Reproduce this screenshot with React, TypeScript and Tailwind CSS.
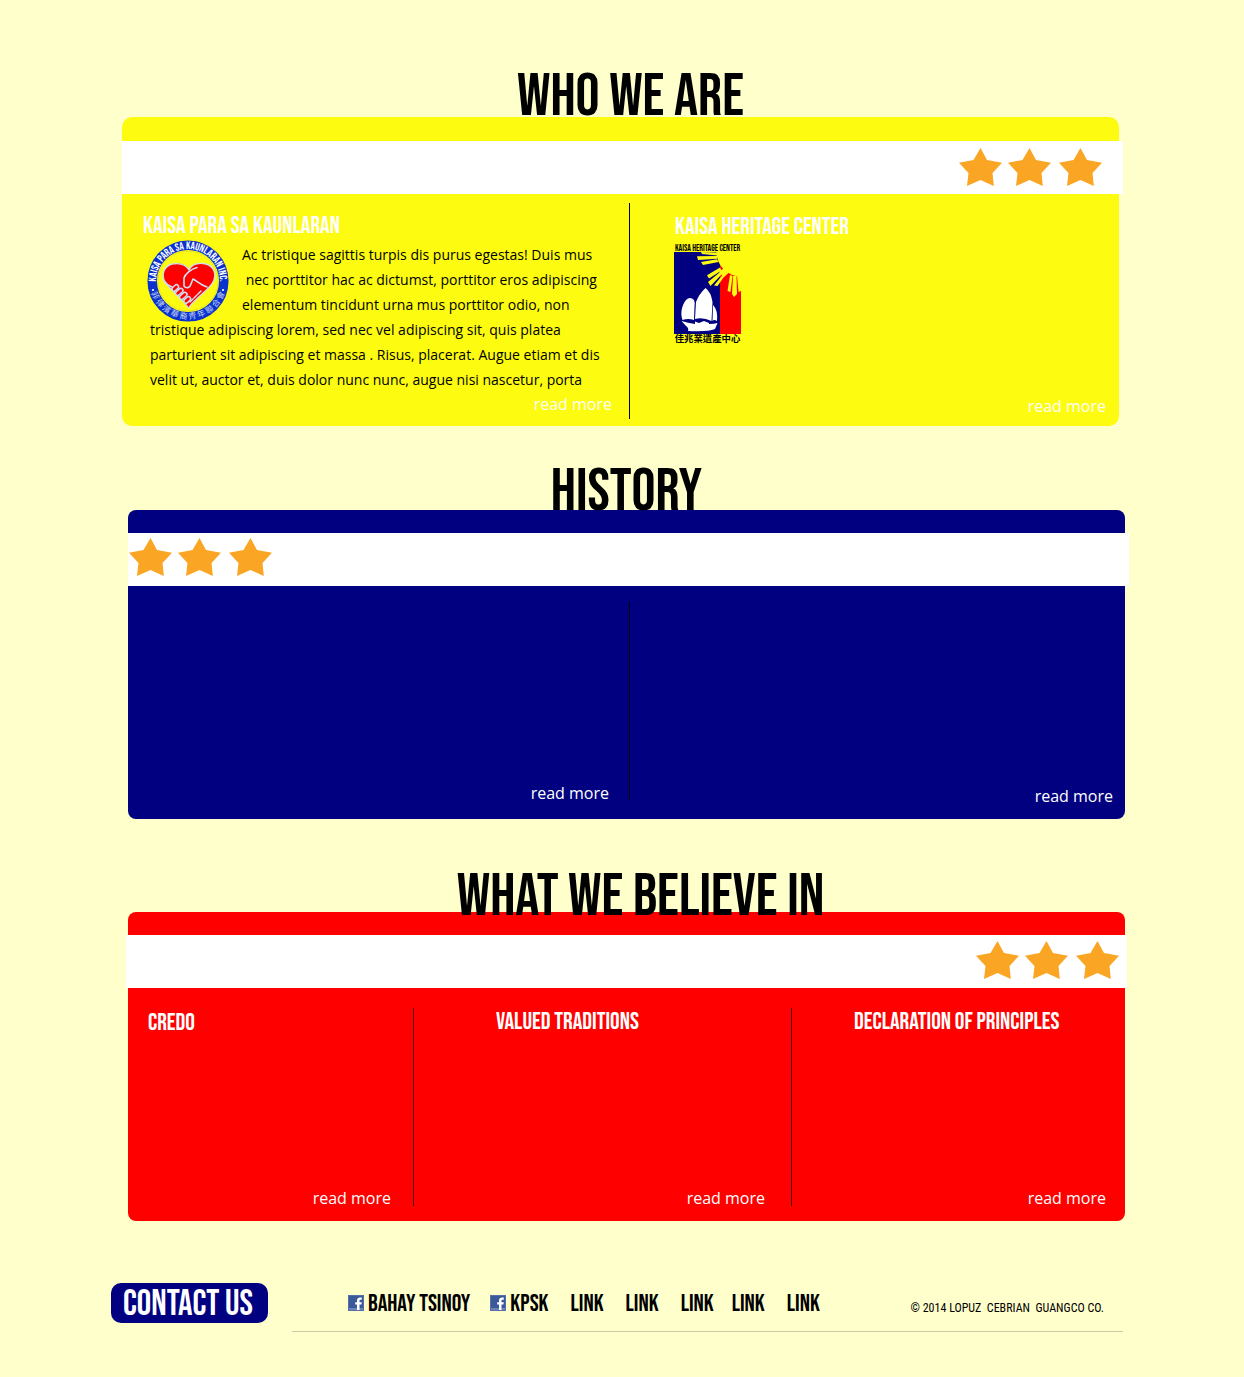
import type { ReactNode } from "react";

function Star() {
  return (
    <svg viewBox="0 0 43 38" className="h-[38px] w-[43px]" fill="#faa523" aria-hidden="true">
      <path d="M21.5 0L28 12L43 14.8L33.5 25L34.8 38L21.5 32L8 38L9.5 25L0 14.8L14.5 12Z" />
    </svg>
  );
}

function Stars() {
  return (
    <div className="flex">
      <Star />
      <span className="ml-1.5 mr-2 flex">
        <Star />
      </span>
      <Star />
    </div>
  );
}

function ReadMore() {
  return (
    <a href="#more" className="mt-auto self-end text-base leading-6 text-white">
      read more
    </a>
  );
}

function Title({ children }: { children: ReactNode }) {
  return (
    <h3 className="font-['Bebas_Neue',Oswald,sans-serif] text-2xl leading-6 text-white">{children}</h3>
  );
}

function Heading({ children, className = "" }: { children: ReactNode; className?: string }) {
  return (
    <h2
      className={`relative text-center font-['Bebas_Neue',Oswald,sans-serif] text-[60px] leading-10 text-black ${className}`}
    >
      {children}
    </h2>
  );
}

function KaisaLogo() {
  return (
    <svg
      viewBox="0 0 82 82"
      className="h-[82px] w-[82px] overflow-visible"
      role="img"
      aria-label="Kaisa Para Sa Kaunlaran Inc."
    >
      <defs>
        <path id="arc-top" d="M12.7 56A32 32 0 1 1 69.3 56" />
        <path id="arc-bottom" d="M2.2 44A39 39 0 0 0 79.8 44" />
      </defs>
      <circle cx="41" cy="41" r="35.8" fill="none" stroke="#0b32cf" strokeWidth="9.5" />
      <circle cx="41" cy="41" r="30" fill="none" stroke="#d4d83a" strokeWidth="0.6" />
      <text fill="#ffffff" fontSize="10.6" textAnchor="middle" className="font-['Bebas_Neue',Oswald,sans-serif]">
        <textPath href="#arc-top" startOffset="50%">
          KAISA PARA SA KAUNLARAN INC.
        </textPath>
      </text>
      <text fill="#c3d2f4" fontSize="8" textAnchor="middle" className="font-['Noto_Sans_CJK_TC',sans-serif]">
        <textPath href="#arc-bottom" startOffset="50%">
          菲 律 濱 華 裔 青 年 聯 合 會
        </textPath>
      </text>
      <circle cx="6" cy="50" r="1.1" fill="#fff" />
      <circle cx="76" cy="50" r="1.1" fill="#fff" />
      <path
        d="M42 30C38 23 31 23 25 24C17 26 14 35 18 42C21 48 35 58 41.5 68C48 58 62 50 66 42C70 35 67 26 59 24C52 22.5 45 24 42 30Z"
        fill="#fe0000"
        stroke="#cfe0f0"
        strokeWidth="1.3"
      />
      <g fill="none" stroke="#cfe0f0" strokeWidth="1.6" strokeLinecap="round" strokeLinejoin="round">
        <path d="M50 27.5C44 29 38 34 37 38V46C39 49 43 48 44 44L46 39C50 41 53 45 60 47" />
        <path d="M17 41C21 46 23 46 25 47" />
      </g>
      <g fill="#fe0000" stroke="#cfe0f0" strokeWidth="1.5">
        <rect x="-3.5" y="-2" width="7.5" height="4.2" rx="2.1" transform="translate(28 48) rotate(-42)" />
        <rect x="-4" y="-2" width="8.5" height="4.2" rx="2.1" transform="translate(32 52) rotate(-42)" />
        <rect x="-4" y="-2" width="8.5" height="4.2" rx="2.1" transform="translate(36 56) rotate(-42)" />
        <rect x="-3.5" y="-2" width="7.5" height="4.2" rx="2.1" transform="translate(40 60) rotate(-42)" />
      </g>
      <path d="M43 62L46 59M47 58L50 55M51 54L54 51" stroke="#cfe0f0" strokeWidth="1.5" strokeLinecap="round" />
    </svg>
  );
}

function HeritageLogo() {
  return (
    <svg viewBox="0 0 67 100" className="h-[100px] w-[67px]" role="img" aria-label="Kaisa Heritage Center">
      <defs>
        <clipPath id="flag">
          <rect x="0" y="8" width="67" height="82" />
        </clipPath>
      </defs>
      <text
        x="33.5"
        y="7"
        fontSize="9"
        textAnchor="middle"
        fill="#000"
        className="font-['Bebas_Neue',Oswald,sans-serif]"
      >
        KAISA HERITAGE CENTER
      </text>
      <g clipPath="url(#flag)">
        <rect x="0" y="8" width="46" height="82" fill="#000080" />
        <rect x="46" y="8" width="21" height="82" fill="#fe0000" />
        <circle cx="67" cy="8" r="24.5" fill="#fdfb0f" />
        <g fill="#fdfb0f">
          <path d="M43 8.5L27 8L28 10L43 11.5Z" />
          <path d="M43 12L23 12.3L24 16L43 14.7Z" />
          <path d="M43 15.2L27 18L29 21L44.5 18Z" />
          <path d="M46 23.5L33 31.2L35 34.5L47.5 26.5Z" />
          <path d="M48 26.5L34 38L36.5 42L50 28Z" />
          <path d="M50.5 28.5L40 41.5L43.5 42L52 30Z" />
          <path d="M45 28L50 24L55 28.5L50 33Z" />
          <path d="M56 31L53.5 47L56.5 48L58.5 32Z" />
          <path d="M59 32L58 50L60 53L63 50L62.5 32Z" />
          <path d="M63 32L64.5 48L67 47V32Z" />
        </g>
      </g>
      <g fill="#fff">
        <path d="M8.5 76C6 69 8 61 12 56Q16 52 20 56Q21 58 20.5 62L20 76Q14 74 8.5 76Z" />
        <path d="M21 75L22 58Q25 50 31.5 44Q37 48 38.5 58L37.5 77Q29 73 21 75Z" />
        <path d="M39 61Q44 66 43 77Q40 75 38.5 77Z" />
        <path d="M7.5 77Q14 79 21 80V77.5L25 79L30 77L35 79V80Q40 80 43.5 79L41 85Q34 88 14 87Q15 84 12 82Z" />
      </g>
      <text
        x="33.5"
        y="98"
        fontSize="9.4"
        fontWeight="700"
        textAnchor="middle"
        fill="#000"
        className="font-['Noto_Sans_CJK_TC',sans-serif]"
      >
        佳兆業遺產中心
      </text>
    </svg>
  );
}

function FacebookIcon() {
  return (
    <svg viewBox="0 0 16 16" className="mb-0.5 mr-1 h-4 w-4" aria-hidden="true">
      <rect width="16" height="16" fill="#3b5998" />
      <rect x="0.5" y="0.5" width="15" height="15" fill="none" stroke="#5570a8" />
      <rect x="1" y="13" width="14" height="2" fill="#6d84b4" />
      <path
        d="M9 15V9.5H7.2V7.2H9V5.5C9 3.5 10.2 2.5 12 2.5H13.8V4.8H12.6C11.7 4.8 11.5 5.2 11.5 5.9V7.2H13.8L13.5 9.5H11.5V15Z"
        fill="#fff"
      />
    </svg>
  );
}

const links = [
  { label: "BAHAY TSINOY", icon: true, gap: "" },
  { label: "KPSK", icon: true, gap: "ml-5" },
  { label: "LINK", icon: false, gap: "ml-[22px]" },
  { label: "LINK", icon: false, gap: "ml-[22px]" },
  { label: "LINK", icon: false, gap: "ml-[22px]" },
  { label: "LINK", icon: false, gap: "ml-[18px]" },
  { label: "LINK", icon: false, gap: "ml-[22px]" },
];

export default function App() {
  return (
    <div className="min-h-screen bg-[#ffffcc] pb-11 pt-[77px] font-['Open_Sans','Noto_Sans',sans-serif] text-black">
      <main>
        <section className="ml-[122px] mr-[125px]">
          <Heading className="pl-5">WHO WE ARE</Heading>
          <div className="rounded-[10px] bg-[#fdfb0f] pt-6">
            <div className="-mr-1 flex justify-end bg-white pb-2 pr-[21px] pt-[7px]">
              <Stars />
            </div>
            <div className="grid min-h-[232px] grid-cols-[507fr_1px_489fr]">
              <article className="flex flex-col pb-2.5 pl-[21px] pr-[17px] pt-5">
                <Title>KAISA PARA SA KAUNLARAN</Title>
                <div className="ml-[7px] mt-1 whitespace-nowrap text-sm leading-[25px]">
                  <div className="float-left -ml-[3px] -mt-0.5 mr-[13px] h-[74px]">
                    <KaisaLogo />
                  </div>
                  <p>
                    Ac tristique sagittis turpis dis purus egestas! Duis mus
                    <br />
                    &nbsp;nec porttitor hac ac dictumst, porttitor eros adipiscing
                    <br />
                    elementum tincidunt urna mus porttitor odio, non
                    <br />
                    tristique adipiscing lorem, sed nec vel adipiscing sit, quis platea
                    <br />
                    parturient sit adipiscing et massa . Risus, placerat. Augue etiam et dis
                    <br />
                    velit ut, auctor et, duis dolor nunc nunc, augue nisi nascetur, porta
                  </p>
                </div>
                <ReadMore />
              </article>
              <div className="mb-[7px] mt-[9px] bg-black" />
              <article className="flex flex-col pb-2 pl-[45px] pr-[13px] pt-[21px]">
                <Title>KAISA HERITAGE CENTER</Title>
                <div className="-ml-px mt-[5px]">
                  <HeritageLogo />
                </div>
                <ReadMore />
              </article>
            </div>
          </div>
        </section>

        <section className="ml-[128px] mr-[119px] mt-[46px]">
          <Heading className="-mb-0.5">HISTORY</Heading>
          <div className="rounded-lg bg-[#000080] pt-[23px]">
            <div className="-mr-1 flex bg-white pb-2.5 pl-px pt-[5px]">
              <Stars />
            </div>
            <div className="grid min-h-[233px] grid-cols-[501fr_1px_495fr]">
              <article className="flex flex-col pb-3.5 pr-5">
                <ReadMore />
              </article>
              <div className="mb-[19px] mt-4 bg-black" />
              <article className="flex flex-col pb-[11px] pr-3">
                <ReadMore />
              </article>
            </div>
          </div>
        </section>

        <section className="ml-[128px] mr-[119px] mt-[58px]">
          <Heading className="-mb-[5px] pl-7">WHAT WE BELIEVE IN</Heading>
          <div className="rounded-lg bg-[#ff0000] pt-[23px]">
            <div className="-mx-0.5 flex justify-end bg-white pb-[9px] pr-2 pt-1.5">
              <Stars />
            </div>
            <div className="grid min-h-[233px] grid-cols-[285fr_1px_377fr_1px_333fr]">
              <article className="flex flex-col pb-[11px] pl-5 pr-[22px] pt-[23px]">
                <Title>CREDO</Title>
                <ReadMore />
              </article>
              <div className="mb-[15px] mt-5 bg-[#500000]" />
              <article className="flex flex-col pb-[11px] pl-[82px] pr-[26px] pt-[22px]">
                <Title>VALUED TRADITIONS</Title>
                <ReadMore />
              </article>
              <div className="mb-[15px] mt-5 bg-[#500000]" />
              <article className="flex flex-col pb-[11px] pl-[62px] pr-[19px] pt-[22px]">
                <Title>DECLARATION OF PRINCIPLES</Title>
                <ReadMore />
              </article>
            </div>
          </div>
        </section>
      </main>

      <footer className="ml-[111px] mr-[121px] mt-[62px] flex items-start">
        <button
          type="button"
          className="shrink-0 rounded-[10px] bg-[#000080] pl-3 pr-[15px] pt-1 font-['Bebas_Neue',Oswald,sans-serif] text-4xl leading-9 text-white"
        >
          CONTACT US
        </button>
        <div className="ml-6 flex h-[49px] grow items-start justify-between border-b border-[#c9cba3] pl-14 pr-[19px] pt-[9px]">
          <nav className="flex">
            {links.map((link, i) => (
              <a
                key={i}
                href="#link"
                className={`flex items-center font-['Bebas_Neue',Oswald,sans-serif] text-2xl leading-6 ${link.gap}`}
              >
                {link.icon && <FacebookIcon />}
                {link.label}
              </a>
            ))}
          </nav>
          <p className="pt-2 font-['Roboto_Condensed','Open_Sans',sans-serif] text-xs leading-4">
            © 2014 LOPUZ&nbsp; CEBRIAN&nbsp; GUANGCO CO.
          </p>
        </div>
      </footer>
    </div>
  );
}
